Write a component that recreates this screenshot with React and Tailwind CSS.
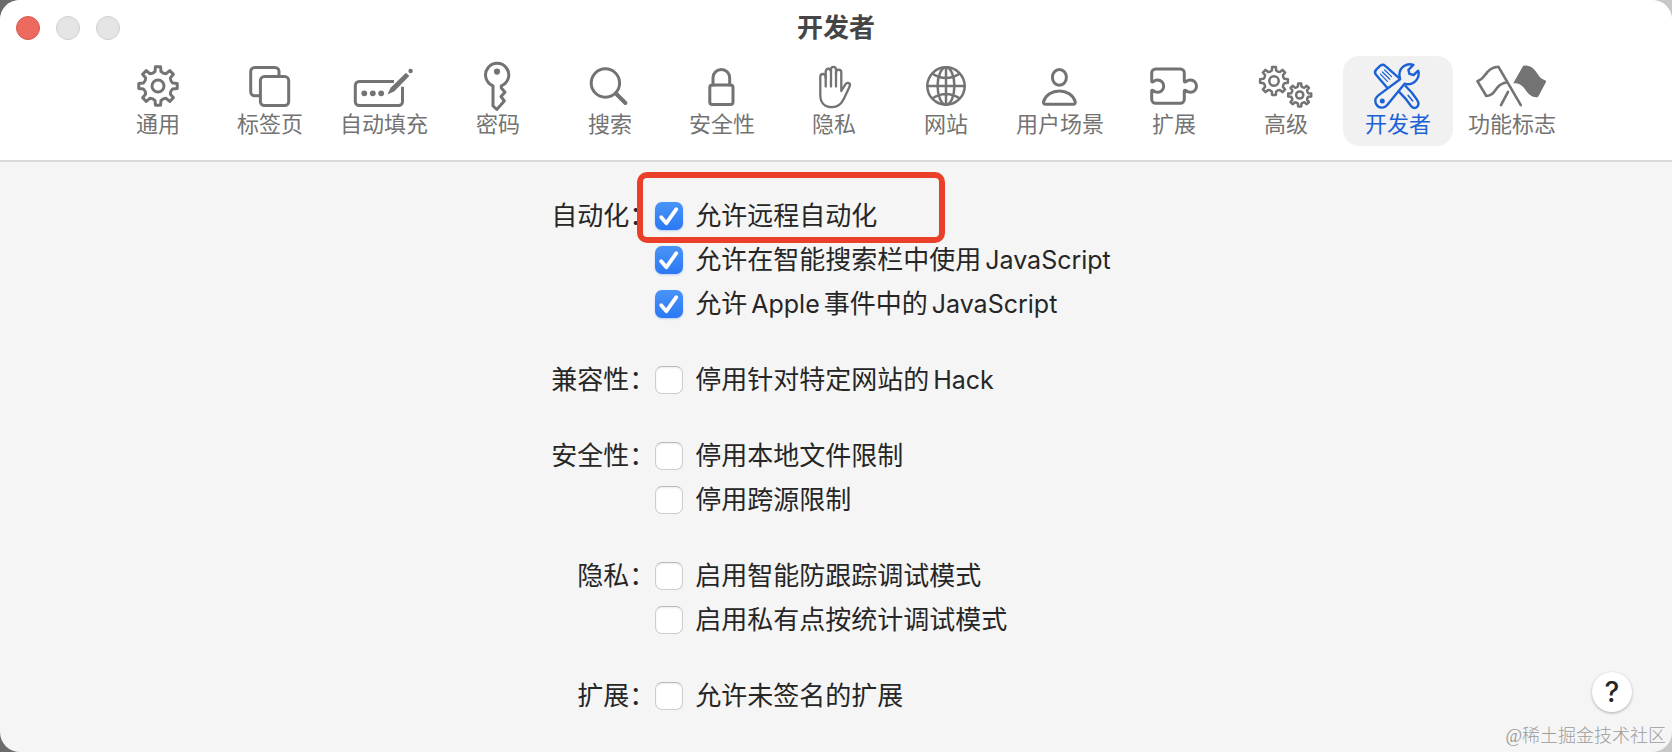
import React, { useState } from "react";

// Outline of a cog wheel with rounded teeth
function gearPath(cx, cy, outer, inner, teeth = 8) {
  const step = (Math.PI * 2) / teeth;
  const at = (r, a) =>
    `${(cx + r * Math.sin(a)).toFixed(2)} ${(cy - r * Math.cos(a)).toFixed(2)}`;
  let d = "";
  for (let i = 0; i < teeth; i++) {
    const a = i * step;
    d += `${i === 0 ? "M" : "L"}${at(inner, a - step * 0.26)}`;
    d += `L${at(outer, a - step * 0.17)}`;
    d += `L${at(outer, a + step * 0.17)}`;
    d += `L${at(inner, a + step * 0.26)}`;
    d += `Q${at(inner - outer * 0.08, a + step * 0.5)} ${at(inner, a + step * 0.74)}`;
  }
  return d + "Z";
}

function Icon({ width = 48, children }) {
  return (
    <svg
      width={width}
      height="48"
      viewBox={`0 0 ${width} 48`}
      fill="none"
      stroke="currentColor"
      strokeWidth="3"
      strokeLinecap="round"
      strokeLinejoin="round"
      className="overflow-visible"
      aria-hidden="true"
    >
      {children}
    </svg>
  );
}

const GeneralIcon = () => (
  <Icon>
    <path d={gearPath(24, 24, 19.4, 14.8)} />
    <circle cx="24" cy="24" r="6" />
  </Icon>
);

const TabsIcon = () => (
  <Icon>
    <path d="M14 33.8H8.7a4 4 0 0 1-4-4V9.4a4 4 0 0 1 4-4H29a4 4 0 0 1 4 4v5" />
    <rect x="14.4" y="14.6" width="28.3" height="29" rx="4" />
  </Icon>
);

const AutofillIcon = () => (
  <Icon width={60}>
    <path
      strokeLinecap="butt"
      d="M40 19.4H5.3a4 4 0 0 0-4 4v16.2a4 4 0 0 0 4 4h39.2a4 4 0 0 0 4-4V24.7"
    />
    <g fill="currentColor" stroke="none">
      <circle cx="10.3" cy="31.3" r="2.9" />
      <circle cx="18.8" cy="31.3" r="2.9" />
      <circle cx="27.2" cy="31.3" r="2.9" />
      <path d="M33.4 32.6l3.2-6.8L52 10.8l3.3 3.3L40.4 29.2z" />
      <circle cx="56.6" cy="9" r="2.2" />
    </g>
  </Icon>
);

const PasswordIcon = () => (
  <Icon>
    <path d="M19 44V23.8A11.6 11.6 0 1 1 27.3 23.8V26L31 30.3 27 34.5 30.3 39 27 42.8 22.8 47.4Z" />
    <circle cx="23" cy="9.6" r="3.1" fill="currentColor" stroke="none" />
  </Icon>
);

const SearchIcon = () => (
  <Icon>
    <circle cx="19.4" cy="21" r="14.2" />
    <path strokeWidth="4" d="M30.4 32l9 9" />
  </Icon>
);

const SecurityIcon = () => (
  <Icon>
    <path d="M15 23v-7.2a8.35 8.35 0 0 1 16.7 0V23" />
    <rect x="11.8" y="23" width="23.2" height="19.5" rx="2.6" />
  </Icon>
);

const PrivacyIcon = () => (
  <Icon>
    <g strokeWidth="2.3">
      <path d="M15.7 24.5V14.7a2.7 2.7 0 0 0-5.4 0V33C10.3 41 15 45.2 22 45.2 28 45.2 31.5 42 34 36.5L39.6 24.6C41 21.3 37.4 19.4 35.4 22.4L31.3 29V10.4a2.65 2.65 0 0 0-5.3 0V24.5" />
      <path d="M15.7 16V9.4a2.65 2.65 0 0 1 5.3 0V24.5" />
      <path d="M21 10V7.4a2.5 2.5 0 0 1 5 0V12" />
    </g>
  </Icon>
);

const WebsitesIcon = () => (
  <Icon>
    <g strokeWidth="2.5">
      <circle cx="24" cy="24" r="18.7" />
      <ellipse cx="24" cy="24" rx="8.4" ry="18.7" />
      <path d="M24 5.3v37.4M5.3 24h37.4M10.5 11.7q13.5 8.6 27 0M10.5 36.3q13.5-8.6 27 0" />
    </g>
  </Icon>
);

const ProfilesIcon = () => (
  <Icon>
    <ellipse cx="23.4" cy="15.3" rx="7" ry="7.9" />
    <path d="M9.6 42.3H37.2a2 2 0 0 0 2-2.7C37.2 33 30.7 29 23.4 29S9.6 33 7.6 39.6a2 2 0 0 0 2 2.7Z" />
  </Icon>
);

const ExtensionsIcon = () => (
  <Icon width={52}>
    <path d="M3.7 19.3V11a4 4 0 0 1 4-4H32.3a4 4 0 0 1 4 4v8.3c0 .8 1 .9 1.8.3A6.2 6.2 0 1 1 38.1 28.7c-.8-.6-1.8-.5-1.8.3V37.3a4 4 0 0 1-4 4H7.7a4 4 0 0 1-4-4V29c0-.8.8-.9 1.6-.3A6.2 6.2 0 1 0 5.3 19.6c-.8.6-1.6.5-1.6-.3Z" />
  </Icon>
);

const AdvancedIcon = () => (
  <Icon width={60}>
    <g strokeWidth="2.5">
      <path d={gearPath(18, 19, 14, 10.7)} />
      <circle cx="18" cy="19" r="4.7" />
      <path d={gearPath(43.7, 33, 11.6, 8.8)} />
      <circle cx="43.7" cy="33" r="3.6" />
    </g>
  </Icon>
);

const DeveloperIcon = () => (
  <Icon>
    <g strokeWidth="2.4">
      <path d="M13.4 26L2 12.8C.7 11.1.8 9 2.2 7.6L6.3 3.7C7.9 2.4 9.8 2.5 11.2 3.8L24.6 15.6" />
      <path strokeWidth="1.2" d="M6.4 12.2l7 7.2M8.4 10l7.4 7.2M10.6 8l7 6.6" />
      <path d="M31.5 24L37.7 30.5 43 37.8C45 40.8 44.6 43.2 43.2 44.8S39 46.5 37 44L31.3 36.3 24.7 29.4" />
      <path strokeWidth="1.6" d="M34.2 33.4l4.5 5.6" />
      <path d="M39.4 2.9C32.8.6 25.9 4.9 25.4 12 25.3 14 25.6 15.6 26.1 17.2L4 33.6C.5 36.6.5 41.2 3.5 44 6.5 46.5 10.7 46.1 13.2 43L30.6 21.7C37.7 24.1 44.4 18.6 44.7 11.7 44.7 10.5 44.6 9.5 44.2 8.7L39.6 13 35.4 11.9 34.4 7.8Z" />
    </g>
    <circle cx="8.3" cy="39" r="2.5" fill="currentColor" stroke="none" />
  </Icon>
);

const FlagsIcon = () => (
  <Icon width={72}>
    <g strokeWidth="2.6">
      <path d="M44.8 43.2L22.5 4.8C15.5 5.3 12.6 8.3 9.4 12.6 7 16 5 18 1.4 19.2L10.3 34C16 33.5 18 30.2 20.8 26.3 23.6 22.4 26.3 20.9 31.2 20.2M32 29.8L25 43.2" />
      <path
        fill="currentColor"
        stroke="none"
        d="M46.6 4.8C47.3 3.6 48 3.3 49.4 3.5 55.5 4.1 58.5 7 61.3 11.5 63.7 15.4 65.8 17.3 69 18.3 70.2 18.8 70.3 19.6 69.7 20.6L62.6 33.9C62 35 61.4 35.4 60 35.2 55 34.6 52 31.7 49.4 27.7 46.2 22.9 43 21.1 37.3 21.2Z"
      />
    </g>
  </Icon>
);

const TABS = [
  { id: "general", label: "通用", icon: GeneralIcon },
  { id: "tabs", label: "标签页", icon: TabsIcon },
  { id: "autofill", label: "自动填充", icon: AutofillIcon },
  { id: "passwords", label: "密码", icon: PasswordIcon },
  { id: "search", label: "搜索", icon: SearchIcon },
  { id: "security", label: "安全性", icon: SecurityIcon },
  { id: "privacy", label: "隐私", icon: PrivacyIcon },
  { id: "websites", label: "网站", icon: WebsitesIcon },
  { id: "profiles", label: "用户场景", icon: ProfilesIcon },
  { id: "extensions", label: "扩展", icon: ExtensionsIcon },
  { id: "advanced", label: "高级", icon: AdvancedIcon },
  { id: "developer", label: "开发者", icon: DeveloperIcon },
  { id: "flags", label: "功能标志", icon: FlagsIcon },
];

// Labels are lists so that Latin words (odd entries) get a little air around them
const GROUPS = [
  {
    title: "自动化：",
    options: [
      { id: "remote", label: ["允许远程自动化"], highlighted: true },
      { id: "search-js", label: ["允许在智能搜索栏中使用", "JavaScript"] },
      { id: "apple-events", label: ["允许", "Apple", "事件中的", "JavaScript"] },
    ],
  },
  {
    title: "兼容性：",
    options: [{ id: "hacks", label: ["停用针对特定网站的", "Hack"] }],
  },
  {
    title: "安全性：",
    options: [
      { id: "local-files", label: ["停用本地文件限制"] },
      { id: "cross-origin", label: ["停用跨源限制"] },
    ],
  },
  {
    title: "隐私：",
    options: [
      { id: "itp", label: ["启用智能防跟踪调试模式"] },
      { id: "pcm", label: ["启用私有点按统计调试模式"] },
    ],
  },
  {
    title: "扩展：",
    options: [{ id: "unsigned", label: ["允许未签名的扩展"] }],
  },
];

function ToolbarTab({ tab, active, onSelect }) {
  const TabIcon = tab.icon;
  return (
    <button
      type="button"
      onClick={() => onSelect(tab.id)}
      aria-pressed={active}
      className={`flex flex-col items-center rounded-2xl pt-1.5 pb-2 ${
        tab.label.length > 3 ? "w-[114px]" : "w-[110px]"
      } ${active ? "bg-[#f1f1f1] text-[#1c62d6]" : "text-[#737373]"}`}
    >
      <TabIcon />
      <span className="text-[22px] leading-7 whitespace-nowrap">{tab.label}</span>
    </button>
  );
}

function Option({ option, checked, onToggle }) {
  return (
    <div className="relative flex h-11 items-center gap-3">
      <span className="grid">
        <input
          id={option.id}
          type="checkbox"
          checked={checked}
          onChange={() => onToggle(option.id)}
          className="col-start-1 row-start-1 size-7 appearance-none rounded-[7px] border border-[#cdcdcd] border-t-[#bababa] bg-white shadow-[inset_0_1px_2px_rgba(0,0,0,0.08)] checked:border-0 checked:bg-linear-to-b checked:from-[#4a93f7] checked:to-[#2c78f5] checked:shadow-[0_1px_2px_rgba(44,120,245,0.3)]"
        />
        {checked && (
          <svg
            viewBox="0 0 28 28"
            fill="none"
            stroke="white"
            strokeWidth="3.8"
            strokeLinecap="round"
            strokeLinejoin="round"
            className="pointer-events-none col-start-1 row-start-1 size-7"
            aria-hidden="true"
          >
            <path d="M6.2 15.2l5.2 6L21.3 7.2" />
          </svg>
        )}
      </span>
      <label
        htmlFor={option.id}
        className="flex items-baseline gap-1 whitespace-nowrap"
      >
        {option.label.map((part, i) => (
          <span key={i} className={i % 2 === 1 ? "text-[25px]" : ""}>
            {part}
          </span>
        ))}
      </label>
      {option.highlighted && (
        <span className="pointer-events-none absolute -top-[22px] -left-[18px] h-[71px] w-[308px] rounded-[10px] border-6 border-[#ea4029]" />
      )}
    </div>
  );
}

export default function App() {
  const [activeTab, setActiveTab] = useState("developer");
  const [enabled, setEnabled] = useState(["remote", "search-js", "apple-events"]);

  const toggle = (id) => {
    setEnabled((prev) =>
      prev.includes(id) ? prev.filter((item) => item !== id) : [...prev, id]
    );
  };

  return (
    <div className="bg-linear-to-r from-[#6b6b6b] to-[#c8c8c8]">
      <div className="flex min-h-screen flex-col overflow-hidden rounded-[20px] bg-[#f5f5f5] font-[Inter,'Noto_Sans_CJK_SC',sans-serif] text-[#262626]">
        <header className="border-b-2 border-[#d9d9d9] bg-white pb-3.5">
          <div className="grid h-14 grid-cols-3 items-center px-4">
            <div className="flex gap-4">
              <button
                type="button"
                aria-label="关闭"
                className="size-6 rounded-full border border-[#d9594f] bg-[#ec6a5e]"
              />
              <button
                type="button"
                aria-label="最小化"
                className="size-6 rounded-full border border-[#cfcfcf] bg-[#e5e5e5]"
              />
              <button
                type="button"
                aria-label="缩放"
                className="size-6 rounded-full border border-[#cfcfcf] bg-[#e5e5e5]"
              />
            </div>
            <h1 className="text-center text-[26px] leading-8 font-bold text-[#454545]">
              开发者
            </h1>
          </div>
          <nav className="flex justify-center gap-0.5">
            {TABS.map((tab) => (
              <ToolbarTab
                key={tab.id}
                tab={tab}
                active={tab.id === activeTab}
                onSelect={setActiveTab}
              />
            ))}
          </nav>
        </header>

        {/* Settings and the corner tools share one grid cell */}
        <main className="grid flex-1">
          <div className="col-start-1 row-start-1 grid grid-cols-[auto_auto] content-start justify-center gap-y-8 pt-8 pr-2.5 pb-6 text-[26px] leading-10">
            {GROUPS.map((group) => (
              <React.Fragment key={group.title}>
                <h2 className="flex h-11 items-center justify-end">{group.title}</h2>
                <div>
                  {group.options.map((option) => (
                    <Option
                      key={option.id}
                      option={option}
                      checked={enabled.includes(option.id)}
                      onToggle={toggle}
                    />
                  ))}
                </div>
              </React.Fragment>
            ))}
          </div>

          <div className="col-start-1 row-start-1 flex flex-col items-end gap-3 self-end justify-self-end pr-1.5 pb-1">
            <button
              type="button"
              aria-label="帮助"
              className="mr-8.5 size-10 rounded-full bg-white text-[28px] leading-10 font-medium shadow-[0_1px_3px_rgba(0,0,0,0.3)]"
            >
              ?
            </button>
            <p className="font-['Liberation_Serif','Noto_Sans_CJK_SC',serif] text-lg leading-6 font-light text-[#9c9c9c]">
              @稀土掘金技术社区
            </p>
          </div>
        </main>
      </div>
    </div>
  );
}
